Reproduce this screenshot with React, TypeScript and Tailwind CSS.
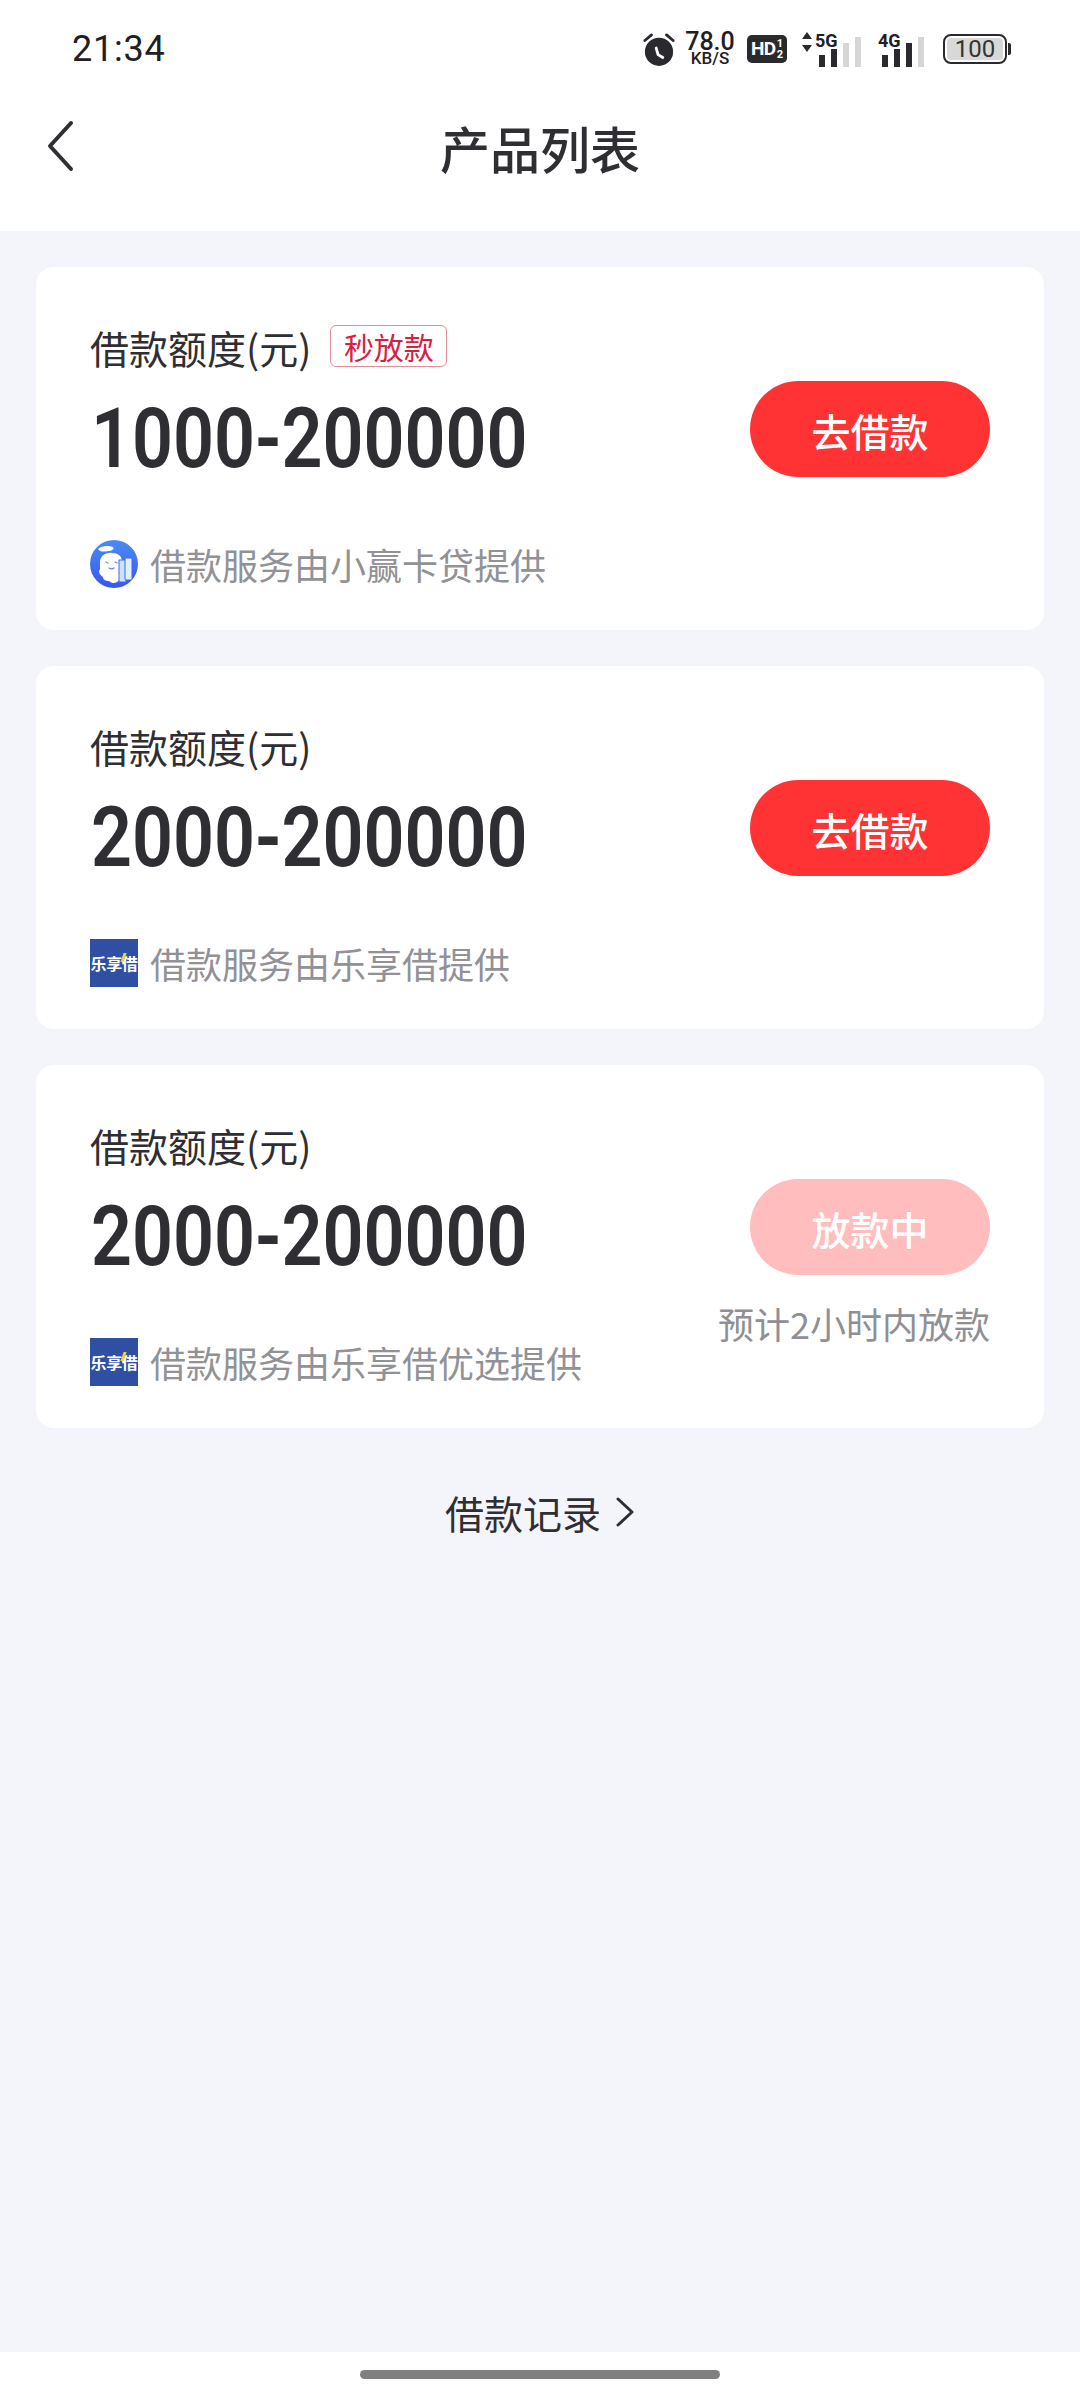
import React from "react";

const CJK = { fontFamily: '"Noto Sans CJK SC", "Noto Sans", sans-serif' };

function Bars({ levels }: { levels: boolean[] }) {
  return (
    <div className="flex items-end gap-[6px]">
      {levels.map((on, i) => (
        <div
          key={i}
          className={on ? "w-[6px] bg-[#2a2a2e]" : "w-[6px] bg-[#d6d6d6]"}
          style={{ height: 12 + i * 6 }}
        />
      ))}
    </div>
  );
}

function StatusBar() {
  return (
    <div className="flex h-[96px] items-center justify-between pl-[72px] pr-[69px] pt-[1px] font-['Roboto',sans-serif] text-[#202024]">
      <span className="text-[36px] font-normal leading-none tracking-[0.8px]">21:34</span>
      <div className="flex items-center">
        <svg width="32" height="36" viewBox="0 0 34 36" className="mr-[10px] ml-[4px]">
          <circle cx="17" cy="21" r="15" fill="#2a2a2e" />
          <path d="M14 17l2 7 5 3" stroke="#fff" strokeWidth="3" fill="none" strokeLinecap="round" />
          <path d="M2 9l7-6M32 9l-7-6" stroke="#2a2a2e" strokeWidth="3" strokeLinecap="round" />
        </svg>
        <div className="mr-[12px] flex w-[50px] flex-col items-center">
          <span className="block h-[19px] text-[25px] font-medium leading-[19px]">78.0</span>
          <span className="block h-[15px] text-[17px] font-medium leading-[15px]">KB/S</span>
        </div>
        <div className="mr-[14px] flex h-[28px] w-[40px] items-center justify-center rounded-[5px] bg-[#2a2a2e] text-white">
          <span className="text-[19px] font-bold leading-none tracking-[-0.5px]">HD</span>
          <span className="ml-[1px] flex flex-col items-center text-[11px] font-bold leading-[11px]">
            <span className="block h-[11px]">1</span>
            <span className="block h-[11px]">2</span>
          </span>
        </div>
        <div className="relative mr-[17px] h-[36px] w-[60px]">
          <svg width="12" height="20" viewBox="0 0 12 20" className="absolute left-0 top-[1px]">
            <path d="M6 0l5 7H1zM6 20l-5-7h10z" fill="#2a2a2e" />
          </svg>
          <span className="absolute left-[14px] top-0 text-[18px] font-bold leading-[20px]">5G</span>
          <div className="absolute bottom-0 right-0">
            <Bars levels={[true, true, false, false]} />
          </div>
        </div>
        <div className="relative mr-[19px] h-[36px] w-[46px]">
          <span className="absolute left-0 top-0 text-[18px] font-bold leading-[20px]">4G</span>
          <div className="absolute bottom-0 right-0">
            <Bars levels={[true, true, true, false]} />
          </div>
        </div>
        <div className="flex items-center">
          <div className="flex h-[30px] w-[64px] items-center justify-center rounded-[8px] border-[2px] border-[#2a2a2e] p-[2px]">
            <div className="flex h-full w-full items-center justify-center rounded-[4px] bg-[#d8d8d8] text-[24px] leading-none text-[#333]">
              100
            </div>
          </div>
          <div className="ml-[1px] h-[12px] w-[3px] rounded-r-[2px] bg-[#2a2a2e]" />
        </div>
      </div>
    </div>
  );
}

function Header() {
  return (
    <div className="relative flex h-[135px] shrink-0 items-start justify-center pt-[23px]">
      <svg
        width="30"
        height="52"
        viewBox="0 0 30 52"
        className="absolute left-[46px] top-[24px]"
      >
        <path d="M25 3L4 26l21 23" stroke="#2e2e33" strokeWidth="4" fill="none" strokeLinecap="round" strokeLinejoin="round" />
      </svg>
      <h1 className="text-[50px] font-medium leading-[56px] text-[#2e2e33]" style={CJK}>产品列表</h1>
    </div>
  );
}

function XiaoyingLogo() {
  return (
    <svg width="48" height="48" viewBox="0 0 48 48" className="shrink-0">
      <defs>
        <linearGradient id="xy" x1="0" y1="0" x2="0" y2="1">
          <stop offset="0" stopColor="#4a8cf2" />
          <stop offset="1" stopColor="#3a55f0" />
        </linearGradient>
      </defs>
      <circle cx="24" cy="24" r="24" fill="url(#xy)" />
      <path d="M8 9c3-3 10-4 15-2 2 2-1 4-5 4-4 1-8 1-10-2z" fill="#fff" />
      <path d="M10 22c0-6 6-10 12-9 6 0 10 3 10 8v17l-5 4c-3 2-6 1-8-1-3 0-6-1-6-4-3-2-5-5-3-8z" fill="#fff" />
      <path d="M16 22l2 1M25 22l2 1M19 28c2 1 4 1 5 0" stroke="#5a8cf0" strokeWidth="1.2" fill="none" strokeLinecap="round" />
      <rect x="29" y="20" width="7" height="22" fill="#cfe2fb" stroke="#3a6bf0" strokeWidth="1" />
      <rect x="35" y="18" width="7" height="22" rx="1" fill="#e4effd" stroke="#3a6bf0" strokeWidth="1" />
    </svg>
  );
}

function LexiangLogo() {
  return (
    <div className="relative flex h-[48px] w-[48px] shrink-0 items-center justify-center bg-[#2f4fa3]">
      <span className="whitespace-nowrap text-[16px] font-bold leading-none tracking-[-0.4px] text-white" style={CJK}>
        乐享借
      </span>
      <div className="absolute left-[32px] top-[14px] h-[9px] w-[3px] skew-x-[-20deg] bg-[#f5d23c]" />
    </div>
  );
}

type CardProps = {
  amount: string;
  logo: React.ReactNode;
  provider: string;
  button: string;
  disabled?: boolean;
  tag?: string;
  note?: string;
};

function Card({ amount, logo, provider, button, disabled, tag, note }: CardProps) {
  return (
    <div className="flex h-[363px] justify-between rounded-[18px] bg-white pl-[54px] pr-[54px]">
      <div className="flex flex-col">
        <div className="mt-[55px] flex h-[50px] items-center" style={CJK}>
          <span className="text-[39px] leading-none text-[#2e2e33]">借款额度(元)</span>
          {tag && (
            <span className="ml-[19px] mt-[-2px] flex h-[42px] w-[117px] items-center justify-center rounded-[6px] border-[1.5px] border-[#e58c9c] text-[30px] leading-none text-[#d8203f]">
              {tag}
            </span>
          )}
        </div>
        <div
          className="ml-[1px] mt-[22px] h-[90px] origin-left scale-x-[0.865] whitespace-nowrap font-['Roboto',sans-serif] text-[83px] font-semibold leading-[90px] text-[#2e2e33]"
        >
          {amount}
        </div>
        <div className="mt-[56px] flex h-[48px] items-center gap-[12px]">
          {logo}
          <span className="text-[36px] leading-none text-[#919196]" style={CJK}>{provider}</span>
        </div>
      </div>
      <div className="flex w-[240px] flex-col items-end pt-[114px]">
        <div
          className={
            disabled
              ? "flex h-[96px] w-[240px] shrink-0 items-center justify-center rounded-full bg-[#ffbdbd] pt-[2px] text-[39px] font-medium leading-none text-white"
              : "flex h-[96px] w-[240px] shrink-0 items-center justify-center rounded-full bg-[#ff3333] pt-[2px] text-[39px] font-medium leading-none text-white"
          }
          style={CJK}
        >
          {button}
        </div>
        {note && (
          <span className="mt-[30px] whitespace-nowrap text-[36px] leading-none text-[#8f8f94]" style={CJK}>{note}</span>
        )}
      </div>
    </div>
  );
}

export default function App() {
  return (
    <div className="flex h-[2400px] w-[1080px] flex-col overflow-hidden bg-[#f4f5fa]">
      <div className="bg-white">
        <StatusBar />
        <Header />
      </div>
      <div className="flex flex-1 flex-col gap-[36px] px-[36px] pt-[36px]">
        <Card
          amount="1000-200000"
          logo={<XiaoyingLogo />}
          provider="借款服务由小赢卡贷提供"
          button="去借款"
          tag="秒放款"
        />
        <Card
          amount="2000-200000"
          logo={<LexiangLogo />}
          provider="借款服务由乐享借提供"
          button="去借款"
        />
        <Card
          amount="2000-200000"
          logo={<LexiangLogo />}
          provider="借款服务由乐享借优选提供"
          button="放款中"
          disabled
          note="预计2小时内放款"
        />
        <div className="mt-[21px] flex items-center justify-center gap-[14px]">
          <span className="text-[39px] leading-[54px] text-[#2e2e33]" style={CJK}>借款记录</span>
          <svg width="20" height="32" viewBox="0 0 20 32">
            <path d="M3 3l14 13L3 29" stroke="#2e2e33" strokeWidth="3" fill="none" strokeLinecap="round" strokeLinejoin="round" />
          </svg>
        </div>
      </div>
      <div className="flex h-[48px] shrink-0 justify-center bg-white pt-[18px]">
        <div className="h-[9px] w-[360px] rounded-full bg-[#808080]" />
      </div>
    </div>
  );
}
